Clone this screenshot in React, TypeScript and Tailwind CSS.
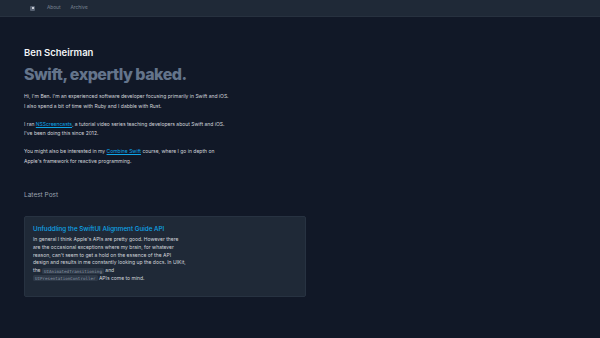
import React from 'react';

const Code: React.FC<{ children: React.ReactNode }> = ({ children }) => (
  <code className="rounded-[1.5px] bg-[#2d3847] px-[2px] py-[0.5px] font-['DejaVu_Sans_Mono',monospace] text-[4.2px] text-[#8c97a6]">
    {children}
  </code>
);

const App: React.FC = () => {
  return (
    <div className="min-h-screen bg-[#111827] font-['Inter',sans-serif]">
      <nav className="flex h-[17px] items-center gap-[10px] border-b border-[#27313f] bg-[#1f2937] pl-[30px] text-[4.8px] text-[#7d8795]">
        <div className="flex h-[5px] w-[5px] items-center justify-center rounded-[1px] bg-[#566071]">
          <div className="h-[2px] w-[2px] bg-[#c8ced6]" />
        </div>
        <span className="ml-[2px]">About</span>
        <span>Archive</span>
      </nav>

      <main className="pl-[24px] pt-[30px]">
        <h2 className="text-[9.5px] font-semibold leading-[12px] text-[#f3f4f6]">Ben Scheirman</h2>
        <h1 className="mt-[6px] text-[16px] font-extrabold leading-[18px] tracking-[-0.5px] text-[#64748b]">
          Swift, expertly baked.
        </h1>

        <div className="mt-[9px] whitespace-nowrap text-[5px] leading-[9.5px] text-[#d1d5db]">
          <p>
            Hi, I'm Ben. I'm an experienced software developer focusing primarily in Swift and iOS.
            <br />I also spend a bit of time with Ruby and I dabble with Rust.
          </p>
          <p className="mt-[8.5px]">
            I ran <span className="text-[#0ea5e9] underline">NSScreencasts</span>, a tutorial video series teaching
            developers about Swift and iOS.
            <br />
            I've been doing this since 2012.
          </p>
          <p className="mt-[8.5px]">
            You might also be interested in my <span className="text-[#0ea5e9] underline">Combine Swift</span> course,
            where I go in depth on
            <br />
            Apple's framework for reactive programming.
          </p>
        </div>

        <h3 className="mt-[25px] text-[6.5px] leading-[9px] text-[#9ca3af]">Latest Post</h3>

        <div className="mt-[15.5px] h-[81px] w-[282px] rounded-[2px] border border-[#273241] bg-[#1f2937] px-[8px] pt-[8px]">
          <h4 className="text-[6.3px] font-medium leading-[9px] text-[#0ea5e9]">
            Unfuddling the SwiftUI Alignment Guide API
          </h4>
          <p className="mt-[2.5px] whitespace-nowrap text-[5px] leading-[7.8px] text-[#d1d5db]">
            In general I think Apple's APIs are pretty good. However there
            <br />
            are the occasional exceptions where my brain, for whatever
            <br />
            reason, can't seem to get a hold on the essence of the API
            <br />
            design and results in me constantly looking up the docs. In UIKit,
            <br />
            the <Code>UIAnimatedTransitioning</Code> and
            <br />
            <Code>UIPresentationController</Code> APIs come to mind.
          </p>
        </div>
      </main>
    </div>
  );
};

export default App;
